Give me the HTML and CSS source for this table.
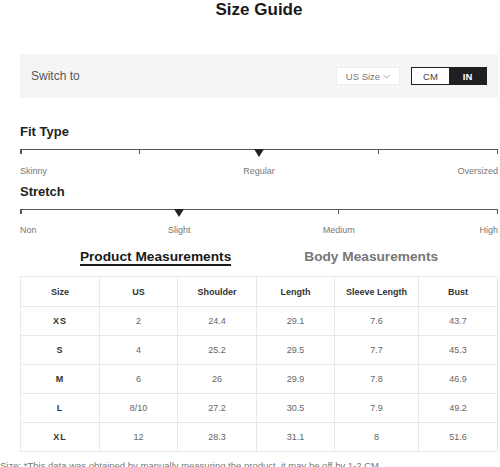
FILE: index.html
```html
<!DOCTYPE html>
<html lang="en">
<head>
    <meta charset="UTF-8">
    <meta name="viewport" content="width=device-width, initial-scale=1.0">
    <title>Size Guide</title>
    <link rel="stylesheet" href="styles.css">
</head>
<body>
    <div class="page">
        <h1 class="title">Size Guide</h1>

        <!-- unit switcher -->
        <div class="switch-bar">
            <span class="switch-label">Switch to</span>
            <div class="switch-controls">
                <div class="size-select">US Size
                    <svg width="7" height="5" viewBox="0 0 7 5"><path d="M0.5 1 L3.5 4 L6.5 1" fill="none" stroke="#999" stroke-width="0.9"/></svg>
                </div>
                <div class="unit-toggle">
                    <span class="unit">CM</span>
                    <span class="unit active">IN</span>
                </div>
            </div>
        </div>

        <h3 class="scale-title fit-title">Fit Type</h3>
        <div class="scale">
            <span class="tick" style="left: 0%"></span>
            <span class="tick" style="left: 25%"></span>
            <span class="tick" style="left: 75%"></span>
            <span class="tick" style="left: 100%"></span>
            <span class="marker" style="left: 50%"></span>
        </div>
        <div class="scale-labels">
            <span class="first">Skinny</span>
            <span style="left: 50%">Regular</span>
            <span class="last">Oversized</span>
        </div>

        <h3 class="scale-title stretch-title">Stretch</h3>
        <div class="scale">
            <span class="tick" style="left: 0%"></span>
            <span class="tick" style="left: 66.67%"></span>
            <span class="tick" style="left: 100%"></span>
            <span class="marker" style="left: 33.33%"></span>
        </div>
        <div class="scale-labels">
            <span class="first">Non</span>
            <span style="left: 33.33%">Slight</span>
            <span style="left: 66.67%">Medium</span>
            <span class="last">High</span>
        </div>

        <div class="tabs">
            <span class="tab active">Product Measurements</span>
            <span class="tab">Body Measurements</span>
        </div>

        <table class="size-table">
            <colgroup>
                <col style="width: 79px">
                <col style="width: 78px">
                <col style="width: 79px">
                <col style="width: 78px">
                <col style="width: 84px">
                <col style="width: 79px">
            </colgroup>
            <thead>
                <tr>
                    <th>Size</th><th>US</th><th>Shoulder</th><th>Length</th><th>Sleeve Length</th><th>Bust</th>
                </tr>
            </thead>
            <tbody id="size-rows"></tbody>
        </table>

        <p class="note">Size: *This data was obtained by manually measuring the product, it may be off by 1-2 CM.</p>
    </div>

    <script>
        const sizes = [
            ['XS', '2', '24.4', '29.1', '7.6', '43.7'],
            ['S', '4', '25.2', '29.5', '7.7', '45.3'],
            ['M', '6', '26', '29.9', '7.8', '46.9'],
            ['L', '8/10', '27.2', '30.5', '7.9', '49.2'],
            ['XL', '12', '28.3', '31.1', '8', '51.6']
        ];

        const rows = document.getElementById('size-rows');
        sizes.forEach(size => {
            const tr = document.createElement('tr');
            size.forEach((value, i) => {
                const td = document.createElement('td');
                td.textContent = value;
                if (i === 0) td.className = 'size-name';
                tr.appendChild(td);
            });
            rows.appendChild(tr);
        });
    </script>
</body>
</html>
```

FILE: styles.css
```css
/* Basic styling */
body {
    font-family: "Liberation Sans", Arial, sans-serif;
    margin: 0;
    padding: 0;
    background-color: #fff;
    color: #333;
}

.page {
    width: 478px;
    padding: 0 2px 0 20px;
}

.title {
    font-size: 17px;
    line-height: 19px;
    font-weight: bold;
    text-align: center;
    margin: 0;
    color: #1a1a1a;
}

.switch-bar {
    margin-top: 35px;
    height: 44px;
    padding: 0 11px;
    background-color: #f5f5f5;
    display: flex;
    justify-content: space-between;
    align-items: center;
}

.switch-label {
    font-size: 12px;
    color: #555;
}

.switch-controls {
    display: flex;
    align-items: center;
    gap: 11px;
}

.size-select {
    width: 64px;
    height: 18px;
    background-color: #fff;
    border: 1px solid #eee;
    box-sizing: border-box;
    font-size: 9.5px;
    color: #777;
    display: flex;
    align-items: center;
    justify-content: center;
    gap: 3px;
}

.unit-toggle {
    display: flex;
    height: 18px;
    border: 1px solid #1f1f1f;
    box-sizing: border-box;
}

.unit {
    width: 37px;
    font-size: 9.5px;
    color: #444;
    background-color: #fff;
    display: flex;
    align-items: center;
    justify-content: center;
}

.unit.active {
    background-color: #1f1f1f;
    color: #fff;
    font-weight: bold;
}

.scale-title {
    font-size: 13px;
    line-height: 16px;
    font-weight: bold;
    margin: 0;
    color: #222;
}

.fit-title {
    margin-top: 26px;
}

.stretch-title {
    margin-top: 7px;
}

.scale {
    position: relative;
    margin-top: 9px;
    height: 9px;
    border-top: 1.5px solid #555;
}

.tick {
    position: absolute;
    top: -1px;
    width: 1.5px;
    height: 5px;
    margin-left: -0.75px;
    background-color: #555;
}

.tick:first-child {
    margin-left: 0;
}

.tick:nth-last-child(2) {
    margin-left: -1.5px;
}

.marker {
    position: absolute;
    top: -1px;
    margin-left: -5px;
    width: 0;
    height: 0;
    border-left: 5px solid transparent;
    border-right: 5px solid transparent;
    border-top: 8px solid #222;
}

.scale-labels {
    position: relative;
    height: 11px;
    margin-top: 6.5px;
    font-size: 9px;
    line-height: 11px;
    color: #777;
}

.scale-labels span {
    position: absolute;
    top: 0;
    transform: translateX(-50%);
    white-space: nowrap;
}

.scale-labels .first {
    left: 0;
    transform: none;
}

.scale-labels .last {
    right: 0;
    transform: none;
}

.tabs {
    margin-top: 13px;
    display: flex;
    justify-content: center;
    gap: 73px;
}

.tab {
    font-size: 13.7px;
    line-height: 15px;
    font-weight: bold;
    color: #777;
    padding-bottom: 0;
    border-bottom: 2px solid transparent;
}

.tab.active {
    color: #1a1a1a;
    border-bottom-color: #1a1a1a;
}

.size-table {
    margin-top: 10px;
    width: 477px;
    border-collapse: collapse;
    table-layout: fixed;
    font-size: 9px;
}

.size-table th,
.size-table td {
    border: 1px solid #e8e8e8;
    text-align: center;
    padding: 0;
}

.size-table th {
    height: 29px;
    font-weight: bold;
    color: #333;
}

.size-table td {
    height: 28px;
    color: #666;
}

.size-table td.size-name {
    font-weight: bold;
    color: #333;
    letter-spacing: 1px;
}

.note {
    margin: 8px 0 0 -20px;
    font-size: 9.5px;
    color: #777;
    white-space: nowrap;
}
```
